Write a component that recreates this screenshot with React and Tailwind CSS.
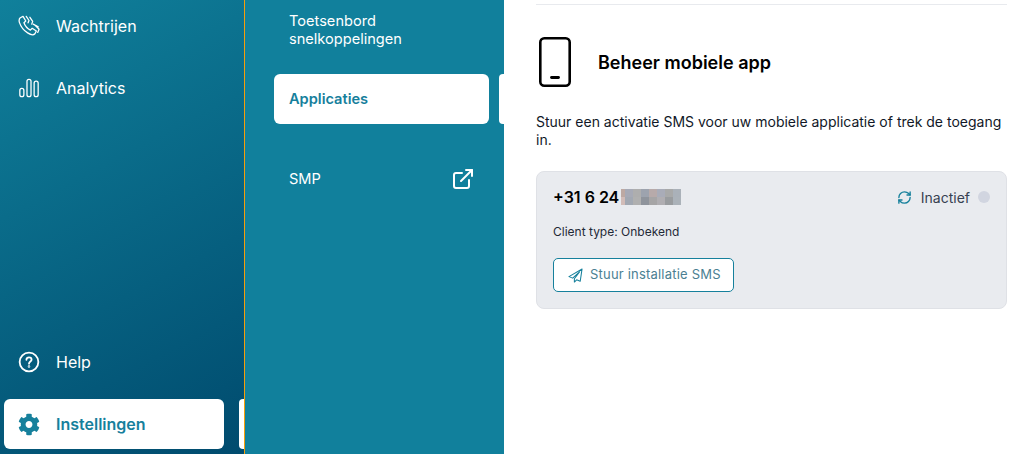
import { ExternalLink, RefreshCw } from "lucide-react";
import { FaCog } from "react-icons/fa";

const font = { fontFamily: "Inter, sans-serif" };

const blurWidths = [4, 8, 8, 8, 8, 8, 8, 8];
const blurCells = [
  ["#bda9a3", "#a7aab6", "#aeaeae", "#9da3ae", "#b7aaaa", "#a9acb8", "#a8a9a9", "#aab1b9"],
  ["#d2bcb8", "#a2a8b2", "#b0b0b0", "#8f949c", "#a6a5a6", "#b0aeb2", "#999c9f", "#abb2b9"],
];

const QueueIcon = () => (
  <svg width="24" height="24" viewBox="0 0 24 24" fill="none" stroke="currentColor" strokeWidth="1.4" strokeLinecap="round" strokeLinejoin="round">
    <path d="M2.5 3 5.5 1.5 8.5 6.5 6.5 8.5C7.5 11.5 10.5 15 13.5 16.5L15.5 14.5 20 17.5 18.5 20.5C17 22 13.5 21.5 10.5 19.5 6.5 17 3 12.5 1.5 8 1 6 1.2 4 2.5 3Z" />
    <path d="M9 1.5 12 6 11 8.5" />
    <path d="M13 2.5 16 7 15 10" />
    <path d="M19.5 12 23 15.5 21.5 19" />
    <path d="M16.5 10 22 13" />
  </svg>
);

const BarsIcon = () => (
  <svg width="24" height="24" viewBox="0 0 24 24" fill="none" stroke="currentColor" strokeWidth="1.4">
    <rect x="2" y="12.5" width="4.4" height="9" rx="2.2" />
    <rect x="9.8" y="2.5" width="4.4" height="19" rx="2.2" />
    <rect x="17.6" y="4.5" width="4.4" height="17" rx="2.2" />
  </svg>
);

const HelpIcon = () => (
  <svg width="24" height="24" viewBox="0 0 24 24" fill="none" stroke="currentColor" strokeWidth="2" strokeLinecap="round">
    <circle cx="12" cy="12" r="10.2" />
    <path d="M9.2 9.6C9.2 7.9 10.4 7 12 7 13.6 7 14.8 8 14.8 9.5 14.8 11.4 12 11.6 12 13.8" />
    <circle cx="12" cy="17" r="0.4" fill="currentColor" />
  </svg>
);

const PhoneIcon = () => (
  <svg width="32" height="50" viewBox="0 0 32 50" fill="none" stroke="#000" strokeWidth="2.6">
    <rect x="1.3" y="1.3" width="29.4" height="47.4" rx="4" />
    <path d="M12.5 40.5H19.5" strokeWidth="2.8" strokeLinecap="round" />
  </svg>
);

const PlaneIcon = () => (
  <svg width="15" height="15" viewBox="0 0 16 16" fill="none" stroke="#16809c" strokeWidth="1.1" strokeLinejoin="round">
    <path d="M15 1 1 9.2 5 10.8 12.5 4 6.8 11.5V15L9.2 12.6 13 14.2Z" />
  </svg>
);

const SideItem = ({ icon, label, active }) => (
  <div
    className={`flex h-[50px] items-center gap-[16px] rounded-md pl-[14px] text-[16px] ${
      active ? "bg-white font-semibold text-[#16809c]" : "font-normal text-white"
    }`}
  >
    <span className="flex w-[22px] justify-center">{icon}</span>
    {label}
  </div>
);

export default function App() {
  return (
    <div className="flex h-[454px] w-[1017px] overflow-hidden bg-white" style={font}>
      <aside className="relative flex w-[245px] shrink-0 flex-col justify-between border-r border-[#f59e0b] bg-[linear-gradient(152deg,#10809b,#004b6e)] pb-[5px] pl-[4px] pr-[20px] pt-px">
        <div className="flex flex-col gap-3">
          <SideItem icon={<QueueIcon />} label="Wachtrijen" />
          <SideItem icon={<BarsIcon />} label="Analytics" />
        </div>
        <div className="flex flex-col gap-3">
          <SideItem icon={<HelpIcon />} label="Help" />
          <SideItem icon={<FaCog size={23} />} label="Instellingen" active />
        </div>
        <div className="absolute bottom-[5px] right-0 h-[50px] w-[5px] rounded-l bg-white" />
      </aside>

      <nav className="relative flex w-[259px] shrink-0 flex-col bg-[#11809c] pl-[29px] pr-[15px] pt-[12px] text-[14.6px] text-white">
        <div className="pl-[15px] leading-[18px]">
          Toetsenbord
          <br />
          snelkoppelingen
        </div>
        <div className="mt-[26px] flex h-[50px] items-center rounded-md bg-white pt-[2px] pl-[15px] font-semibold text-[#16809c]">
          Applicaties
        </div>
        <div className="mt-[30px] flex h-[50px] items-center justify-between pl-[15px] pr-[14px]">
          <span className="pt-[2px]">SMP</span>
          <ExternalLink size={24} strokeWidth={2} />
        </div>
        <div className="absolute right-0 top-[74px] h-[50px] w-[5px] rounded-l bg-white" />
      </nav>

      <main className="min-w-0 flex-1 pl-[32px] pr-[10px] pt-[4px]">
        <div className="border-t border-[#e8eaee]" />
        <div className="mt-[32px] flex items-center pl-[3px]">
          <PhoneIcon />
          <h2 className="ml-[27px] text-[18px] font-semibold text-black">Beheer mobiele app</h2>
        </div>
        <p className="mt-[26px] text-[14px] leading-[18px] text-[#111827]">
          Stuur een activatie SMS voor uw mobiele applicatie of trek de toegang in.
        </p>
        <section className="mt-[22px] h-[138px] rounded-lg border border-[#dfe1e6] bg-[#e9ebef] px-4 pt-[13px]">
          <div className="flex items-center justify-between">
            <div className="flex items-center text-[16px] font-semibold text-black">
              +31 6 24
              <div className="ml-[2px] flex flex-col">
                {blurCells.map((row, r) => (
                  <div key={r} className="flex">
                    {row.map((c, i) => (
                      <div key={i} className="h-2" style={{ backgroundColor: c, width: blurWidths[i] }} />
                    ))}
                  </div>
                ))}
              </div>
            </div>
            <div className="flex items-center text-[14px] text-[#374151]">
              <RefreshCw size={15} strokeWidth={2.2} className="text-[#16809c]" />
              <span className="ml-[9px]">Inactief</span>
              <span className="ml-[8px] h-3 w-3 rounded-full bg-[#d1d5e0]" />
            </div>
          </div>
          <div className="mt-[15px] text-[12px] leading-4 text-[#1f2937]">Client type: Onbekend</div>
          <button
            type="button"
            className="mt-[18px] flex h-[34px] w-[181px] items-center gap-[7px] rounded-[5px] border border-[#16809c] bg-white pl-[14px] text-[13px] tracking-[0.2px] text-[#4b7f92]"
          >
            <PlaneIcon />
            Stuur installatie SMS
          </button>
        </section>
      </main>
    </div>
  );
}
